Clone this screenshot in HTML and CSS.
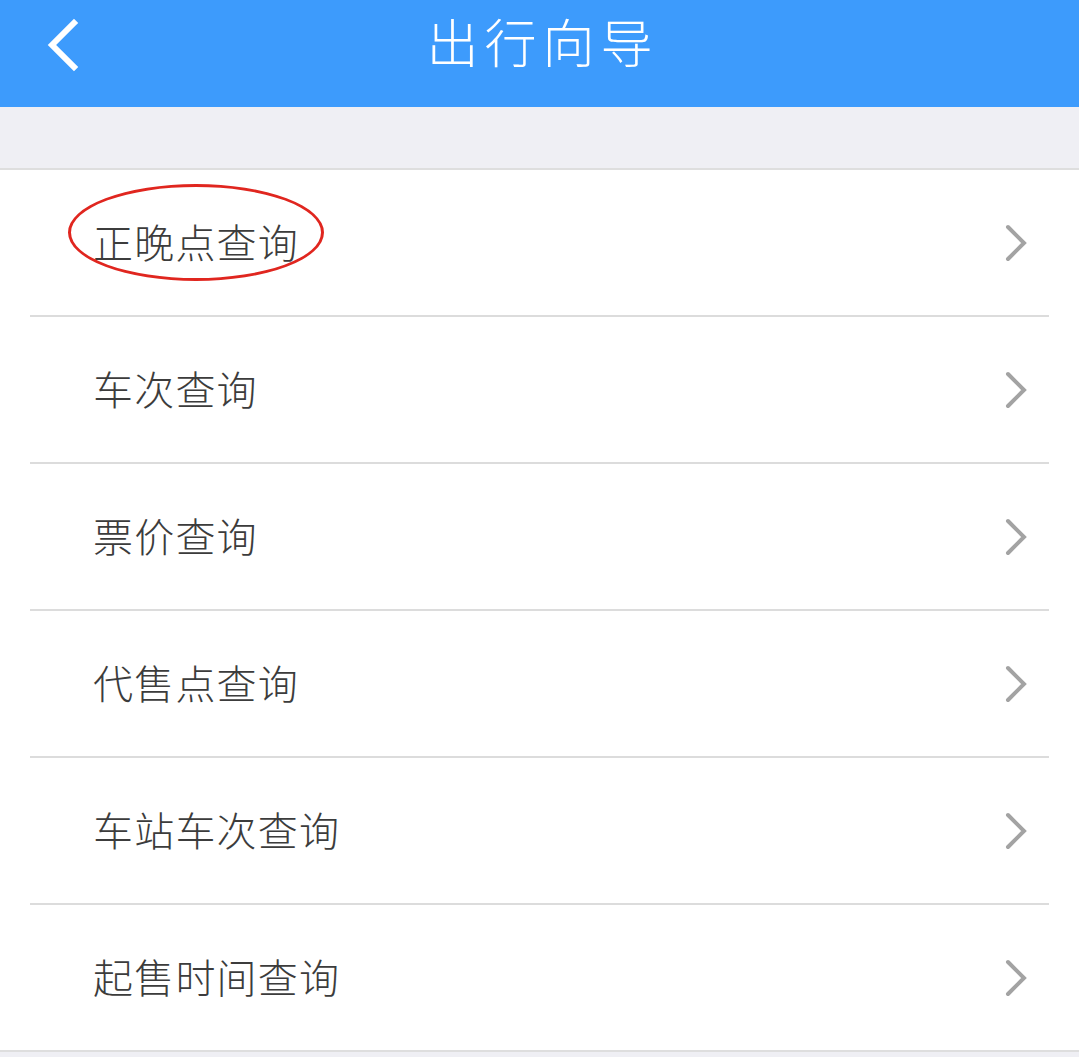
FILE: index.html
```html
<!DOCTYPE html>
<html lang="zh-CN">
<head>
<meta charset="utf-8">
<title>出行向导</title>
<link rel="stylesheet" href="styles.css">
</head>
<body>
<header class="topbar">
  <a class="back" href="#" aria-label="返回">
    <svg width="40" height="56" viewBox="0 0 40 56"><path d="M30 6 L8 28 L30 50" fill="none" stroke="#fff" stroke-width="6" stroke-linecap="square" stroke-linejoin="miter"/></svg>
  </a>
  <h1 class="title">出行向导</h1>
</header>
<div class="spacer"></div>
<ul class="menu">
  <li class="item"><span class="label circled">正晚点查询</span><svg class="arrow" width="30" height="44" viewBox="0 0 30 44"><path d="M6 6 L22 22 L6 38" fill="none" stroke="#a3a3a3" stroke-width="4" stroke-linecap="round"/></svg></li>
  <li class="item"><span class="label">车次查询</span><svg class="arrow" width="30" height="44" viewBox="0 0 30 44"><path d="M6 6 L22 22 L6 38" fill="none" stroke="#a3a3a3" stroke-width="4" stroke-linecap="round"/></svg></li>
  <li class="item"><span class="label">票价查询</span><svg class="arrow" width="30" height="44" viewBox="0 0 30 44"><path d="M6 6 L22 22 L6 38" fill="none" stroke="#a3a3a3" stroke-width="4" stroke-linecap="round"/></svg></li>
  <li class="item"><span class="label">代售点查询</span><svg class="arrow" width="30" height="44" viewBox="0 0 30 44"><path d="M6 6 L22 22 L6 38" fill="none" stroke="#a3a3a3" stroke-width="4" stroke-linecap="round"/></svg></li>
  <li class="item"><span class="label">车站车次查询</span><svg class="arrow" width="30" height="44" viewBox="0 0 30 44"><path d="M6 6 L22 22 L6 38" fill="none" stroke="#a3a3a3" stroke-width="4" stroke-linecap="round"/></svg></li>
  <li class="item last"><span class="label">起售时间查询</span><svg class="arrow" width="30" height="44" viewBox="0 0 30 44"><path d="M6 6 L22 22 L6 38" fill="none" stroke="#a3a3a3" stroke-width="4" stroke-linecap="round"/></svg></li>
</ul>
</body>
</html>
```
FILE: styles.css
```css
html, body {
  margin: 0;
  padding: 0;
  background: #efeff4;
  font-family: "Noto Sans CJK SC", "Noto Sans", sans-serif;
}
.topbar {
  position: relative;
  height: 107px;
  background: #3d9bfc;
  display: flex;
  justify-content: center;
}
.back {
  position: absolute;
  left: 44px;
  top: 17px;
  display: block;
  line-height: 0;
}
.title {
  margin: 0;
  padding-top: 6px;
  color: #fff;
  font-size: 52px;
  font-weight: 300;
  letter-spacing: 6px;
  line-height: 70px;
  text-indent: 6px;
}
.spacer {
  height: 61px;
}
.menu {
  list-style: none;
  margin: 0;
  padding: 0;
  background: #fff;
  border-top: 2px solid #dedede;
  border-bottom: 2px solid #dedede;
}
.item {
  height: 145px;
  margin: 0 30px;
  padding: 0 17px 0 63px;
  border-bottom: 2px solid #dcdcdc;
  display: flex;
  align-items: center;
  justify-content: space-between;
}
.item.last {
  border-bottom: none;
}
.label {
  position: relative;
  font-size: 40px;
  font-weight: 300;
  letter-spacing: 1.2px;
  color: #3c3c3c;
  line-height: 1;
  margin-top: -4px;
}
.circled::before {
  content: "";
  position: absolute;
  left: -25px;
  top: -37px;
  width: 250px;
  height: 91px;
  border: 3px solid #e0261f;
  border-radius: 50%;
  box-sizing: content-box;
}
.arrow {
  display: block;
}
```
